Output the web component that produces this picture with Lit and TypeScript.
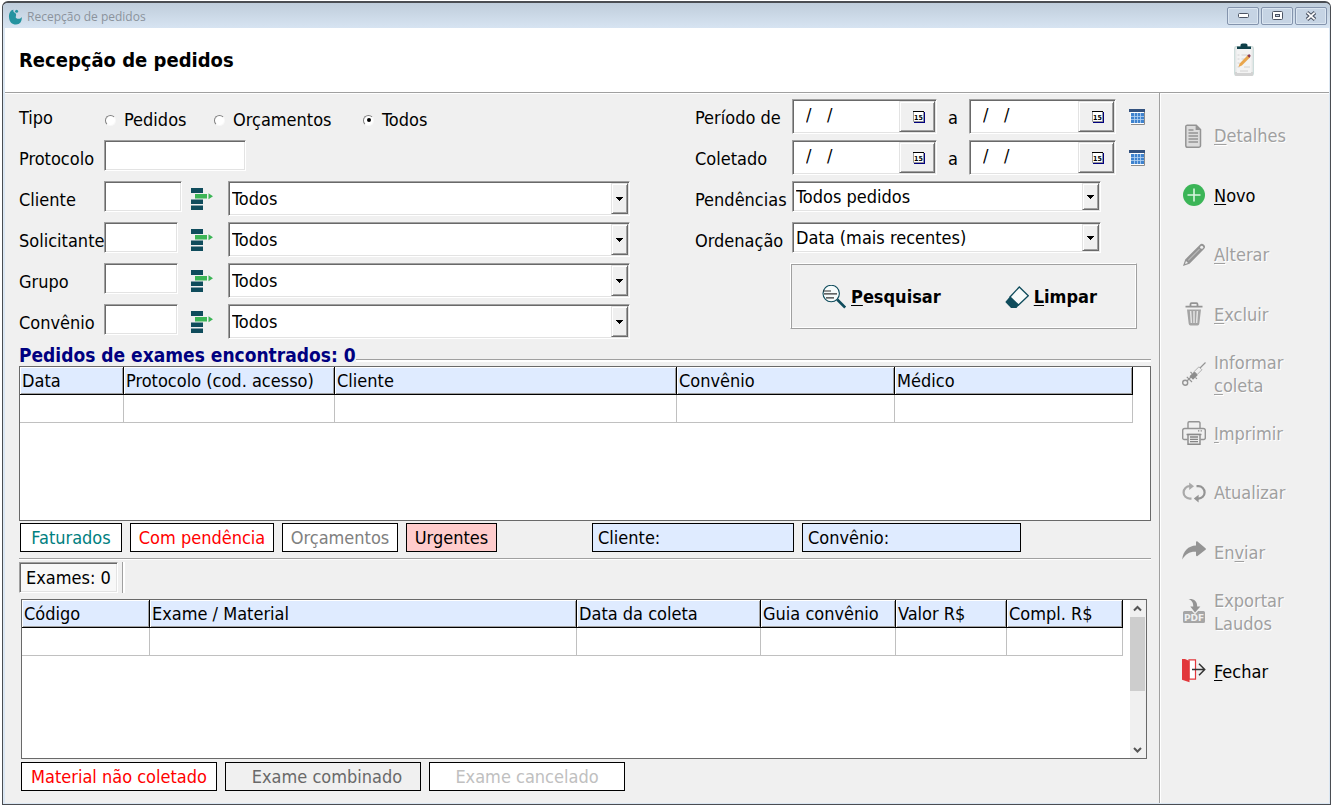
import { LitElement, html, css, svg, nothing } from "lit";
import { customElement, property, state } from "lit/decorators.js";
import { classMap } from "lit/directives/class-map.js";

interface Column {
  title: string;
  width: number;
}

interface Action {
  icon: string;
  lines: string[];
  key: string;
  enabled?: boolean;
}

const ORDER_COLUMNS: Column[] = [
  { title: "Data", width: 104 },
  { title: "Protocolo (cod. acesso)", width: 211 },
  { title: "Cliente", width: 342 },
  { title: "Convênio", width: 218 },
  { title: "Médico", width: 238 },
];

const EXAM_COLUMNS: Column[] = [
  { title: "Código", width: 128 },
  { title: "Exame / Material", width: 427 },
  { title: "Data da coleta", width: 184 },
  { title: "Guia convênio", width: 135 },
  { title: "Valor R$", width: 111 },
  { title: "Compl. R$", width: 116 },
];

const ACTIONS: Action[] = [
  { icon: "details", lines: ["Detalhes"], key: "D" },
  { icon: "add", lines: ["Novo"], key: "N", enabled: true },
  { icon: "edit", lines: ["Alterar"], key: "A" },
  { icon: "trash", lines: ["Excluir"], key: "E" },
  { icon: "syringe", lines: ["Informar", "coleta"], key: "c" },
  { icon: "print", lines: ["Imprimir"], key: "I" },
  { icon: "refresh", lines: ["Atualizar"], key: "" },
  { icon: "send", lines: ["Enviar"], key: "v" },
  { icon: "pdf", lines: ["Exportar", "Laudos"], key: "" },
  { icon: "exit", lines: ["Fechar"], key: "F", enabled: true },
];

const ICONS: Record<string, unknown> = {
  details: svg`
    <path d="M5.500 1.200h8.700l4.300 4.300v16a1.800 1.800 0 0 1-1.800 1.800H5.600a1.800 1.800 0 0 1-1.800-1.800V2.600a1.400 1.400 0 0 1 1.700-1.400z" fill="#dcdcdc" stroke="#949494" stroke-width="1.500"/>
    <path d="M13.600 1v5h5z" fill="#949494"/>
    <path d="M6.500 6h5M6.500 9h9.500M6.500 12h9.500M6.500 15h9.500M6.500 18h9.500" stroke="#949494" stroke-width="1.500"/>`,
  add: svg`
    <circle cx="12" cy="12" r="11" fill="#3bb557"/>
    <path d="M12 5.500v13M5.500 12h13" stroke="#d9f5df" stroke-width="1.600"/>`,
  edit: svg`
    <path d="M1 23l2.200-6.600L17.700 1.900a2.900 2.900 0 0 1 4.300 4.200L7.500 20.700z" fill="#949494"/>
    <path d="M6.300 17.300L17.500 6.100" stroke="#b9b9b9" stroke-width="1.200"/>
    <path d="M3 21l1-3 2 2z" fill="#efefef"/>
    <circle cx="19.700" cy="4.300" r="1.500" fill="#efefef"/>`,
  trash: svg`
    <path d="M3.500 4.600h17M8.500 4V2.200a1 1 0 0 1 1-1h5a1 1 0 0 1 1 1V4" fill="none" stroke="#949494" stroke-width="1.800"/>
    <path d="M5 7.500h14l-1.700 14.300a1.800 1.800 0 0 1-1.800 1.600h-7a1.800 1.800 0 0 1-1.800-1.600z" fill="#a4a4a4"/>
    <path d="M8.600 9l.8 12M12 9v12M15.400 9l-.8 12" stroke="#e4e4e4" stroke-width="1.500"/>`,
  syringe: svg`
    <circle cx="3.200" cy="20.800" r="2.500" fill="none" stroke="#949494" stroke-width="1.400"/>
    <path d="M5 19l4-4M4.800 14.800l5.200 5.200M18 6L23.500.5" fill="none" stroke="#949494" stroke-width="1.200"/>
    <path d="M7.500 14.200l4.800-4.800 3.500 3.500-4.800 4.800z" fill="#8c8c8c"/>
    <path d="M12.300 9.400l4.600-4.600 3 3-4.600 4.600z" fill="#efefef" stroke="#a8a8a8" stroke-width=".9"/>
    <path d="M8.500 10l1.600 1.600M13.400 15.400l1.500 1.500" stroke="#949494" stroke-width="1.200"/>`,
  print: svg`
    <path d="M6 7.500V2a1.200 1.200 0 0 1 1.200-1.200h9.600A1.200 1.200 0 0 1 18 2v5.500" fill="none" stroke="#949494" stroke-width="1.400"/>
    <path d="M5.500 18.500H2.300A1.600 1.600 0 0 1 .7 16.900V9.600a2.100 2.100 0 0 1 2.100-2.100h18.400a2.100 2.100 0 0 1 2.100 2.100v7.300a1.600 1.600 0 0 1-1.600 1.600h-3.200" fill="none" stroke="#949494" stroke-width="1.400"/>
    <path d="M4.500 13.500h15" stroke="#949494" stroke-width="1.400"/>
    <path d="M6 13.500h12v9.800H6z" fill="#ececec" stroke="#8a8a8a" stroke-width="1.400"/>
    <path d="M8 16h8M8 18.300h8M8 20.600h8" stroke="#858585" stroke-width="1.300"/>
    <path d="M16 9.800h1.300M18.600 9.800h1.300" stroke="#858585" stroke-width="1.300"/>`,
  refresh: svg`
    <path d="M9.500 17.600H7.800A6.200 6.200 0 0 1 7.800 5.200h1.400" fill="none" stroke="#a9a9a9" stroke-width="2.200"/>
    <path d="M7.200 1.400L12 5.200 7.200 9z" fill="#a9a9a9"/>
    <path d="M14.500 5.200h1.900a6.200 6.200 0 0 1 0 12.400h-1.600" fill="none" stroke="#949494" stroke-width="2.200"/>
    <path d="M16.600 13.800L11.800 17.600l4.800 3.800z" fill="#949494"/>`,
  send: svg`
    <path d="M.2 19.600C1 11 6.300 6 14 5.600V2.200c0-.9.800-1.200 1.500-.6l8 6.600c.6.500.6 1 0 1.500l-8 6.200c-.7.500-1.500.2-1.500-.6v-3.500C8 11.400 3.500 14 .2 19.600z" fill="#949494"/>`,
  pdf: svg`
    <path d="M6.500-1C12-1.500 15.300 1 15.200 6.500h3.200L13 12.600 8.300 6.500h3C11.300 2.700 10 .5 6.500-1z" fill="#949494"/>
    <path d="M2.500 11h7.300L13 14.200 16.200 11h5.300A1.500 1.500 0 0 1 23 12.500v9a1.500 1.500 0 0 1-1.500 1.500h-19A1.500 1.500 0 0 1 1 21.500v-9A1.500 1.500 0 0 1 2.500 11z" fill="#a6a6a6"/>
    <text x="12" y="21" text-anchor="middle" class="glyph-text">PDF</text>`,
  exit: svg`
    <path d="M7 .8h6.500v19.400H7z" fill="#fff" stroke="#e2373b" stroke-width="1.200"/>
    <path d="M0 0h3l4.500 2v21.300L0 20.800z" fill="#e2373b"/>
    <path d="M10 10.500h12.500M17 4.800l5.700 5.700-5.700 5.700" fill="none" stroke="#333" stroke-width="1.500"/>`,
};

/* Two-pixel bevels shared by every sunken or raised control. */
const base = css`
  * {
    box-sizing: border-box;
  }
  button,
  input,
  select {
    font: inherit;
    color: inherit;
    margin: 0;
    padding: 0;
    border: 0;
    border-radius: 0;
    background: none;
    min-width: 0;
  }
  .sunken {
    background: #fff;
    border: 1px solid;
    border-color: #a0a0a0 #fff #fff #a0a0a0;
    box-shadow: inset 1px 1px #696969, inset -1px -1px #e3e3e3;
  }
  .raised {
    background: #f0f0f0;
    border: 1px solid;
    border-color: #e3e3e3 #696969 #696969 #e3e3e3;
    box-shadow: inset 1px 1px #fff, inset -1px -1px #a0a0a0;
  }
`;

@customElement("select-box")
class SelectBox extends LitElement {
  @property() value = "";
  @property() label = "";

  static styles = [
    base,
    css`
      :host {
        display: block;
      }
      .box {
        display: grid;
        height: 100%;
        padding: 1px;
      }
      select {
        grid-area: 1 / 1;
        appearance: none;
        padding: 1px 20px 0 2px;
        width: 100%;
      }
      .arrow {
        grid-area: 1 / 1;
        justify-self: end;
        width: 17px;
        display: grid;
        place-items: center;
        pointer-events: none;
      }
    `,
  ];

  render() {
    return html`
      <div class="box sunken">
        <select aria-label=${this.label}>
          <option>${this.value}</option>
        </select>
        <span class="arrow raised">
          <svg width="7" height="4" viewBox="0 0 7 4" shape-rendering="crispEdges">
            <path d="M0 0h7L3.500 4z" fill="#000" />
          </svg>
        </span>
      </div>
    `;
  }
}

@customElement("date-box")
class DateBox extends LitElement {
  @property() label = "";

  static styles = [
    base,
    css`
      :host {
        display: block;
      }
      .box {
        display: flex;
        height: 100%;
        padding: 1px;
      }
      input {
        flex: 1;
        padding: 0 0 3px 12px;
        outline: none;
      }
      button {
        width: 36px;
        display: grid;
        place-items: center;
        padding-left: 3px;
      }
      text {
        font: 700 7px "DejaVu Sans Condensed", sans-serif;
      }
    `,
  ];

  render() {
    return html`
      <div class="box sunken">
        <input type="text" aria-label=${this.label} value="/   /" />
        <button class="raised" aria-label="Abrir calendário">
          <svg width="12" height="12" viewBox="0 0 12 12">
            <path d="M1 1h11v11H1z" fill="#000080" />
            <path d="M.5.500h10v10H.5z" fill="#fff" stroke="#999" />
            <path d="M0 .5h11" stroke="#000" />
            <text x="5.500" y="8.500" text-anchor="middle">15</text>
          </svg>
        </button>
      </div>
    `;
  }
}

@customElement("data-grid")
class DataGrid extends LitElement {
  @property({ attribute: false }) columns: Column[] = [];
  @property({ type: Boolean }) scroll = false;

  static styles = [
    base,
    css`
      :host {
        display: flex;
        background: #fff;
        border: 1px solid #696969;
        overflow: hidden;
      }
      .view {
        flex: 1;
        min-width: 0;
        overflow: hidden;
      }
      table {
        table-layout: fixed;
        border-collapse: separate;
        border-spacing: 0;
        width: 0;
      }
      th,
      td {
        height: 28px;
        padding: 0 2px;
        border-right: 1px solid #c0c0c0;
        border-bottom: 1px solid #c0c0c0;
      }
      th {
        font-weight: 400;
        text-align: left;
        white-space: nowrap;
        line-height: 27px;
        background: #dfebff;
        border-color: #000;
        box-shadow: inset 1px 1px #fff, inset -1px -1px #a0a0a0;
      }
      .bar {
        width: 16px;
        padding-right: 1px;
        display: flex;
        flex-direction: column;
        background: #f0f0f0;
      }
      .bar svg {
        height: 17px;
        width: 15px;
      }
      .thumb {
        height: 74px;
        background: #cdcdcd;
      }
      .track {
        flex: 1;
      }
    `,
  ];

  render() {
    return html`
      <div class="view">
        <table>
          <colgroup>
            ${this.columns.map((c) => html`<col style="width:${c.width}px" />`)}
          </colgroup>
          <thead>
            <tr>
              ${this.columns.map((c) => html`<th scope="col">${c.title}</th>`)}
            </tr>
          </thead>
          <tbody>
            <tr>
              ${this.columns.map(() => html`<td></td>`)}
            </tr>
          </tbody>
        </table>
      </div>
      ${this.scroll
        ? html`<div class="bar">
            <svg viewBox="0 0 15 17">
              <path d="M4 10.500L7.500 7l3.500 3.500" fill="none" stroke="#555" stroke-width="2" />
            </svg>
            <div class="thumb"></div>
            <div class="track"></div>
            <svg viewBox="0 0 15 17">
              <path d="M4 7l3.500 3.500L11 7" fill="none" stroke="#555" stroke-width="2" />
            </svg>
          </div>`
        : nothing}
    `;
  }
}

@customElement("app-root")
class AppRoot extends LitElement {
  @state() private kind = "Todos";

  static styles = [
    base,
    css`
      :host {
        display: block;
        height: 100vh;
        min-height: 680px;
        padding: 1px 1px 1px 2px;
        box-sizing: border-box;
        background: #fff;
        color: #000;
        font: 18px/22px "DejaVu Sans Condensed", "DejaVu Sans", sans-serif;
        overflow: hidden;
      }
      .window {
        height: 100%;
        display: flex;
        flex-direction: column;
        border: 1px solid #4a4d52;
        border-top-width: 2px;
        border-radius: 6px 6px 0 0;
        background: #dbe7f3;
        overflow: hidden;
      }
      .titlebar {
        flex: none;
        height: 25px;
        display: flex;
        align-items: center;
        gap: 4px;
        padding: 2px 3px 0 5px;
        background: linear-gradient(#bfcddb, #d7e4f2);
        color: #8b939c;
        font: 12px/16px "Open Sans", sans-serif;
      }
      .titlebar span {
        flex: 1;
      }
      .controls {
        display: flex;
        gap: 2px;
        padding-bottom: 2px;
      }
      .controls button {
        width: 32px;
        height: 18px;
        display: grid;
        place-items: center;
        border: 1px solid #8494ad;
        border-radius: 2px;
        background: #c6d4e4;
        box-shadow: inset 0 0 0 1px #dbe6f1;
      }
      .frame {
        flex: 1;
        min-height: 0;
        margin: 0 1px 1px 2px;
        display: flex;
        flex-direction: column;
        background: #f0f0f0;
      }
      header {
        flex: none;
        height: 65px;
        display: flex;
        align-items: center;
        justify-content: space-between;
        padding: 0 75px 0 14px;
        background: #fff;
        border-bottom: 1px solid #a0a0a0;
        box-shadow: 0 1px #fff;
      }
      h1,
      h2 {
        margin: 0;
        font-size: 20px;
        line-height: 22px;
        font-weight: 700;
      }
      h2 {
        font-size: 19px;
      }
      .body {
        flex: 1;
        min-height: 0;
        display: flex;
      }
      main {
        flex: 1;
        min-width: 0;
        display: flex;
        flex-direction: column;
        padding: 6px 8px 12px 14px;
      }
      .filters {
        display: flex;
        gap: 64px;
      }
      .rows {
        display: grid;
        grid-auto-rows: 35px;
        gap: 6px;
      }
      .row {
        display: grid;
        align-items: start;
      }
      .left .row {
        grid-template-columns: 85px 87px 22px 417px;
      }
      .right .row {
        grid-template-columns: 97px 1fr;
      }
      .left {
        padding-right: 1px;
      }
      .row .name,
      .caption {
        line-height: 38px;
        height: 35px;
        white-space: nowrap;
      }
      .field {
        height: 31px;
        width: 74px;
        padding: 0 4px;
        outline: none;
      }
      .field.code {
        width: 78px;
      }
      .field.wide {
        width: 142px;
      }
      .lookup {
        height: 35px;
        display: grid;
        place-items: center;
      }
      .left select-box {
        height: 35px;
        margin-left: 15px;
      }
      .right select-box {
        height: 31px;
        width: 309px;
      }
      .span {
        grid-column: 2 / -1;
      }
      .radios {
        display: grid;
        grid-template-columns: 109px 149px auto;
        padding-top: 10px;
      }
      .radios label {
        display: flex;
        align-items: center;
        gap: 8px;
      }
      .radios input {
        appearance: none;
        width: 11px;
        height: 11px;
        border-radius: 50%;
        border: 1px solid;
        border-color: #808080 #f8f8f8 #f8f8f8 #808080;
        background: #fff;
        display: grid;
        place-items: center;
        margin-left: 1px;
      }
      .radios input:checked::before {
        content: "";
        width: 4px;
        height: 4px;
        border-radius: 50%;
        background: #000;
      }
      .dates {
        display: grid;
        grid-template-columns: 145px 32px 147px auto;
      }
      .dates date-box {
        height: 35px;
      }
      .dates .to {
        text-align: center;
        line-height: 38px;
      }
      .dates .pick {
        height: 35px;
        padding-left: 13px;
        display: grid;
        align-items: center;
      }
      .search {
        display: flex;
        align-items: center;
        gap: 64px;
        height: 66px;
        width: 347px;
        margin-left: 95px;
        padding: 2px 31px 0;
        border: 1px solid;
        border-color: #fff #a0a0a0 #a0a0a0 #fff;
        box-shadow: inset 1px 1px #a0a0a0, inset -1px -1px #fff;
        font-weight: 700;
      }
      .search button {
        display: flex;
        align-items: center;
        gap: 5px;
      }
      .u {
        text-decoration: underline;
        text-decoration-thickness: 1px;
        text-underline-offset: 2px;
      }
      .group {
        display: flex;
        align-items: center;
        margin-top: 5px;
        color: #000080;
      }
      .group::after {
        content: "";
        flex: 1;
        margin-top: 10px;
        height: 2px;
        border-top: 1px solid #a0a0a0;
        background: #fff;
      }
      .orders {
        flex: none;
        height: 155px;
      }
      .legends {
        flex: none;
        display: flex;
        gap: 8px;
        margin-top: 2px;
        padding-left: 1px;
      }
      .tag {
        height: 29px;
        line-height: 28px;
        border: 1px solid #000;
        background: #fff;
        text-align: center;
        white-space: nowrap;
      }
      .billed {
        width: 102px;
        color: #008080;
      }
      .pending {
        width: 144px;
        color: #f00;
      }
      .quote {
        width: 116px;
        color: #808080;
      }
      .urgent {
        width: 91px;
        background: #ffcccc;
      }
      .info {
        width: 202px;
        padding-left: 5px;
        text-align: left;
        background: #dfebff;
      }
      .info.client {
        margin-left: 87px;
      }
      .info.plan {
        width: 219px;
      }
      .rule {
        flex: none;
        margin-top: 6px;
        height: 2px;
        border-top: 1px solid #a0a0a0;
        background: #fff;
      }
      .tabs {
        flex: none;
        display: flex;
        gap: 4px;
        margin: 2px 0 6px;
        height: 31px;
      }
      .tab {
        padding: 0 6px;
        background: #f8f8f8;
      }
      .tabs::after {
        content: "";
        width: 2px;
        background: #fff;
        border-left: 1px solid #a0a0a0;
      }
      .exams {
        flex: 1;
        min-height: 0;
        margin: 0 4px 0 2px;
      }
      .legends.bottom {
        margin-top: 3px;
        padding-left: 2px;
      }
      .bottom .tag {
        width: 196px;
      }
      .missing {
        color: #f00;
      }
      .combined {
        color: #696969;
        background: #f0f0f0;
        padding-left: 8px;
      }
      .canceled {
        color: #c0c0c0;
      }
      aside {
        flex: none;
        width: 170px;
        padding-top: 13px;
        border-left: 1px solid #a0a0a0;
        box-shadow: inset 1px 0 #fff;
      }
      nav {
        height: 595px;
        display: flex;
        flex-direction: column;
      }
      nav button {
        flex: 1;
        display: flex;
        align-items: center;
        gap: 8px;
        padding-left: 22px;
        text-align: left;
        line-height: 23px;
      }
      nav svg {
        flex: none;
        overflow: visible;
      }
      nav button:disabled {
        color: #a0a0a0;
        text-shadow: 1px 1px #fff;
      }
      .line {
        display: block;
      }
      .glyph-text {
        font: 700 9px "DejaVu Sans", sans-serif;
        fill: #f0f0f0;
        text-shadow: none;
      }
    `,
  ];

  private mnemonic(text: string, key: string) {
    const at = key ? text.indexOf(key) : -1;
    return at < 0
      ? text
      : html`${text.slice(0, at)}<span class="u">${key}</span>${text.slice(at + 1)}`;
  }

  private lookupRow(name: string, id: string, code = false) {
    return html`
      <div class="row">
        <label class="name" for=${id}>${name}</label>
        <input id=${id} type="text" class=${classMap({ field: true, sunken: true, code })} />
        <button class="lookup" aria-label="Localizar ${name}">
          <svg width="22" height="22" viewBox="0 0 22 22">
            <path d="M0 0h12v5H0zM0 11.500h12V16H0zM0 17.500h12V22H0z" fill="#0f4c5c" />
            <path d="M4 6h12v4.500H4zM17.500 5.200l4.500 3-4.500 3z" fill="#3cb556" />
          </svg>
        </button>
        <select-box label=${name} value="Todos"></select-box>
      </div>
    `;
  }

  private dateRow(name: string) {
    return html`
      <div class="row">
        <span class="caption">${name}</span>
        <div class="dates">
          <date-box label="${name}: início"></date-box>
          <span class="to">a</span>
          <date-box label="${name}: fim"></date-box>
          <button class="pick" aria-label="Escolher ${name}">
            <svg width="17" height="16" viewBox="0 0 17 16">
              <path d="M1.500 3h14v12h-14z" fill="#fff" />
              <path d="M2 15.500h13.500V3" fill="none" stroke="#8c8c8c" />
              <path d="M0 0h16v3H0z" fill="#33527f" />
              <path d="M2 4h13v10H2z" fill="#3f83cf" />
              <path d="M2 7.500h13M2 10.500h13M5.500 4v10M8.500 4v10M11.500 4v10" stroke="#b5d3f2" stroke-width=".8" />
            </svg>
          </button>
        </div>
      </div>
    `;
  }

  render() {
    return html`
      <div class="window">
        <div class="titlebar">
          <svg width="15" height="16" viewBox="0 0 15 16">
            <path d="M5.500 .7C2 1 .8 5 1 8c.2 5 3 7.500 7 7.500 4 0 6-3 5.800-7.500-1 1.800-3.300 2.300-5 1.500C6.800 8.500 8.500 7 8 5 7.500 3.500 4.500 3 5.500.7z" fill="#2593a0" />
            <circle cx="8.600" cy="2.200" r="1.500" fill="#2593a0" />
          </svg>
          <span>Recepção de pedidos</span>
          <div class="controls">
            <button aria-label="Minimizar">
              <svg width="11" height="5" viewBox="0 0 11 5">
                <rect x=".5" y=".5" width="10" height="4" rx="1" fill="#fff" stroke="#4c5464" />
              </svg>
            </button>
            <button aria-label="Maximizar">
              <svg width="11" height="9" viewBox="0 0 11 9">
                <rect x=".5" y=".5" width="10" height="8" rx="1" fill="#fff" stroke="#4c5464" />
                <rect x="3.500" y="3.500" width="4" height="2" fill="#c6d4e4" stroke="#4c5464" />
              </svg>
            </button>
            <button aria-label="Fechar janela">
              <svg width="12" height="10" viewBox="0 0 12 10">
                <path d="M2 1.500l8 7M10 1.500l-8 7" stroke="#4c5464" stroke-width="3.800" />
                <path d="M2.300 1.700l7.400 6.600M9.700 1.700L2.300 8.300" stroke="#fff" stroke-width="1.800" />
              </svg>
            </button>
          </div>
        </div>
        <div class="frame">
          <header>
            <h1>Recepção de pedidos</h1>
            <svg width="20" height="34" viewBox="0 0 20 34">
              <rect x=".7" y="3.500" width="18.600" height="29" rx="1.800" fill="#ededed" stroke="#c9dad8" stroke-width="1.200" />
              <path d="M1 29h18v2.500a1.500 1.500 0 0 1-1.500 1.500h-15A1.500 1.500 0 0 1 1 31.500z" fill="#d3d3d3" />
              <path d="M3 6h14v24H3z" fill="#f3f3f3" />
              <path d="M3.500 12h2M3.500 16h2M3.500 20h2M3.500 24h2M7.500 12h7M7.500 16h4M10 24h6M6 28h8" stroke="#d2d2d2" stroke-width="1" />
              <path d="M3 6V3.600h3.500V2.200C6.500 1 8 .6 10 .6s3.500.4 3.500 1.600v1.400H17V6z" fill="#0e3f48" />
              <path d="M4.500 24l1.200-3.500 8.200-8.400 2.200 2.200-8.200 8.300z" fill="#e9a64d" />
              <path d="M13.300 12.700l1.300-1.200c.9-.7 2.600 1 1.800 1.900l-1.100 1.300z" fill="#8b3a55" />
            </svg>
          </header>
          <div class="body">
            <main>
              <div class="filters">
                <div class="rows left">
                  <div class="row">
                    <span class="caption">Tipo</span>
                    <div class="radios span">
                      ${["Pedidos", "Orçamentos", "Todos"].map(
                        (k) => html`<label>
                          <input
                            type="radio"
                            name="tipo"
                            .checked=${this.kind === k}
                            @change=${() => (this.kind = k)}
                          />${k}
                        </label>`
                      )}
                    </div>
                  </div>
                  <div class="row">
                    <label class="name" for="protocolo">Protocolo</label>
                    <input id="protocolo" type="text" class="field wide sunken span" />
                  </div>
                  ${this.lookupRow("Cliente", "cliente", true)}
                  ${this.lookupRow("Solicitante", "solicitante")}
                  ${this.lookupRow("Grupo", "grupo")}
                  ${this.lookupRow("Convênio", "convenio")}
                </div>
                <div class="rows right">
                  ${this.dateRow("Período de")} ${this.dateRow("Coletado")}
                  <div class="row">
                    <span class="caption">Pendências</span>
                    <select-box label="Pendências" value="Todos pedidos"></select-box>
                  </div>
                  <div class="row">
                    <span class="caption">Ordenação</span>
                    <select-box label="Ordenação" value="Data (mais recentes)"></select-box>
                  </div>
                  <div class="search">
                    <button>
                      <svg width="24" height="24" viewBox="0 0 24 24">
                        <circle cx="9.200" cy="8.500" r="8.200" fill="#f7fbfb" stroke="#0f4c5c" stroke-width="1.100" />
                        <path d="M1 6h8M2 8.800h13M4 12.800h8" stroke="#333" stroke-width="1.200" />
                        <path d="M15.200 14.500l8 8" stroke="#0f4c5c" stroke-width="2.600" />
                      </svg>
                      <span>${this.mnemonic("Pesquisar", "P")}</span>
                    </button>
                    <button>
                      <svg width="24" height="24" viewBox="0 0 24 24">
                        <path d="M5 12L14.300 2l9 8.800L13.500 20z" fill="#f6fafa" stroke="#0f4c5c" stroke-width="1.300" />
                        <path d="M5 11.500l8.800 8.700L11.500 23H6L.3 17z" fill="#0f4c5c" />
                      </svg>
                      <span>${this.mnemonic("Limpar", "L")}</span>
                    </button>
                  </div>
                </div>
              </div>
              <h2 class="group">Pedidos de exames encontrados: 0</h2>
              <data-grid class="orders" .columns=${ORDER_COLUMNS}></data-grid>
              <div class="legends">
                <span class="tag billed">Faturados</span>
                <span class="tag pending">Com pendência</span>
                <span class="tag quote">Orçamentos</span>
                <span class="tag urgent">Urgentes</span>
                <span class="tag info client">Cliente:</span>
                <span class="tag info plan">Convênio:</span>
              </div>
              <div class="rule"></div>
              <div class="tabs">
                <button class="tab sunken">Exames: 0</button>
              </div>
              <data-grid class="exams" scroll .columns=${EXAM_COLUMNS}></data-grid>
              <div class="legends bottom">
                <span class="tag missing">Material não coletado</span>
                <span class="tag combined">Exame combinado</span>
                <span class="tag canceled">Exame cancelado</span>
              </div>
            </main>
            <aside>
              <nav>
                ${ACTIONS.map(
                  (a) => html`<button ?disabled=${!a.enabled}>
                    <svg width="24" height="24" viewBox="0 0 24 24">${ICONS[a.icon]}</svg>
                    <span>
                      ${a.lines.map(
                        (l) => html`<span class="line">${this.mnemonic(l, a.key)}</span>`
                      )}
                    </span>
                  </button>`
                )}
              </nav>
            </aside>
          </div>
        </div>
      </div>
    `;
  }
}
